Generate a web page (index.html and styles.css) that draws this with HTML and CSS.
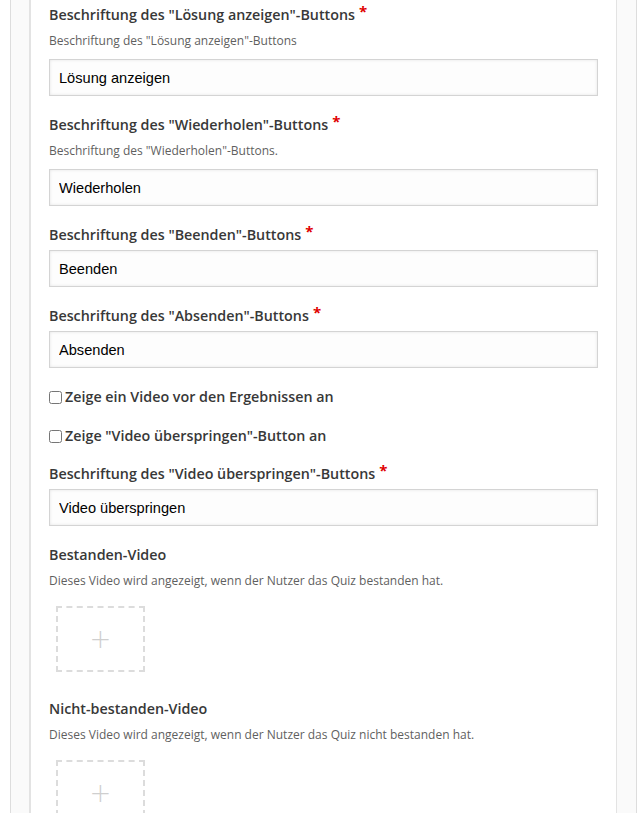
FILE: index.html
```html
<!DOCTYPE html>
<html lang="de">
<head>
<meta charset="utf-8">
<title>Einstellungen</title>
<link rel="stylesheet" href="styles.css">
</head>
<body>
<div class="outer">
  <div class="inner">
    <div class="field">
      <div class="label">Beschriftung des "Lösung anzeigen"-Buttons<span class="req">*</span></div>
      <div class="desc">Beschriftung des "Lösung anzeigen"-Buttons</div>
      <input class="text" type="text" value="Lösung anzeigen">
    </div>
    <div class="field">
      <div class="label">Beschriftung des "Wiederholen"-Buttons<span class="req">*</span></div>
      <div class="desc">Beschriftung des "Wiederholen"-Buttons.</div>
      <input class="text" type="text" value="Wiederholen">
    </div>
    <div class="field">
      <div class="label">Beschriftung des "Beenden"-Buttons<span class="req">*</span></div>
      <input class="text" type="text" value="Beenden">
    </div>
    <div class="field">
      <div class="label">Beschriftung des "Absenden"-Buttons<span class="req">*</span></div>
      <input class="text" type="text" value="Absenden">
    </div>
    <div class="field check">
      <label class="label"><input type="checkbox" class="cb">Zeige ein Video vor den Ergebnissen an</label>
    </div>
    <div class="field check check-last">
      <label class="label"><input type="checkbox" class="cb">Zeige "Video überspringen"-Button an</label>
    </div>
    <div class="field">
      <div class="label">Beschriftung des "Video überspringen"-Buttons<span class="req">*</span></div>
      <input class="text" type="text" value="Video überspringen">
    </div>
    <div class="field">
      <div class="label">Bestanden-Video</div>
      <div class="desc">Dieses Video wird angezeigt, wenn der Nutzer das Quiz bestanden hat.</div>
      <div class="upload"><span class="plus">+</span></div>
    </div>
    <div class="field">
      <div class="label">Nicht-bestanden-Video</div>
      <div class="desc">Dieses Video wird angezeigt, wenn der Nutzer das Quiz nicht bestanden hat.</div>
      <div class="upload"><span class="plus">+</span></div>
    </div>
  </div>
</div>
</body>
</html>
```
FILE: styles.css
```css
html, body {
  margin: 0;
  padding: 0;
  background: #ffffff;
}
body {
  font-family: "Open Sans", "Noto Sans", sans-serif;
  color: #333333;
  overflow-x: hidden;
}
.outer {
  margin-left: 10px;
  width: 627px;
  box-sizing: border-box;
  border-left: 1px solid #dddddd;
  border-right: 1px solid #dddddd;
  background: #fafafa;
  padding: 0 19px 0 18px;
}
.inner {
  background: #ffffff;
  border-left: 2px solid #e3e3e3;
  border-right: 1px solid #e3e3e3;
  padding: 4px 18px 0 18px;
}
.field {
  margin-bottom: 18px;
}
.label {
  display: block;
  font-size: 14.3px;
  font-weight: 600;
  line-height: 22px;
  color: #383838;
  margin-bottom: 4px;
}
.req {
  color: #e00000;
  font-size: 15px;
  font-weight: 700;
  line-height: 0;
  margin-left: 4px;
  position: relative;
  top: -3px;
}
.desc {
  font-size: 12px;
  line-height: 20px;
  padding-top: 1px;
  color: #5f5f5f;
  margin-bottom: 8px;
}
.text {
  display: block;
  box-sizing: border-box;
  width: 100%;
  height: 37px;
  margin: 0;
  padding: 0 9px;
  border: 1px solid #d4d4d4;
  box-shadow: inset 0 0 3px #e2e2e2;
  background: #fdfdfd;
  font-family: "Liberation Sans", Arial, sans-serif;
  font-size: 14.6px;
  color: #000000;
  outline: none;
}
.check {
  margin-bottom: 17px;
}
.check-last {
  margin-bottom: 16px;
}
.check .label {
  display: flex;
  align-items: center;
  margin-bottom: 0;
}
.cb {
  width: 13px;
  height: 13px;
  margin: 0 3px 0 0;
}
.upload {
  margin-left: 7px;
  margin-top: 15px;
  width: 85px;
  height: 62px;
  border: 2px dashed #dcdcdc;
  display: flex;
  align-items: center;
  justify-content: center;
  margin-bottom: 26px;
}
.plus {
  font-family: "DejaVu Sans", sans-serif;
  font-weight: 200;
  font-size: 26px;
  color: #cfcfcf;
  line-height: 1;
}
```
